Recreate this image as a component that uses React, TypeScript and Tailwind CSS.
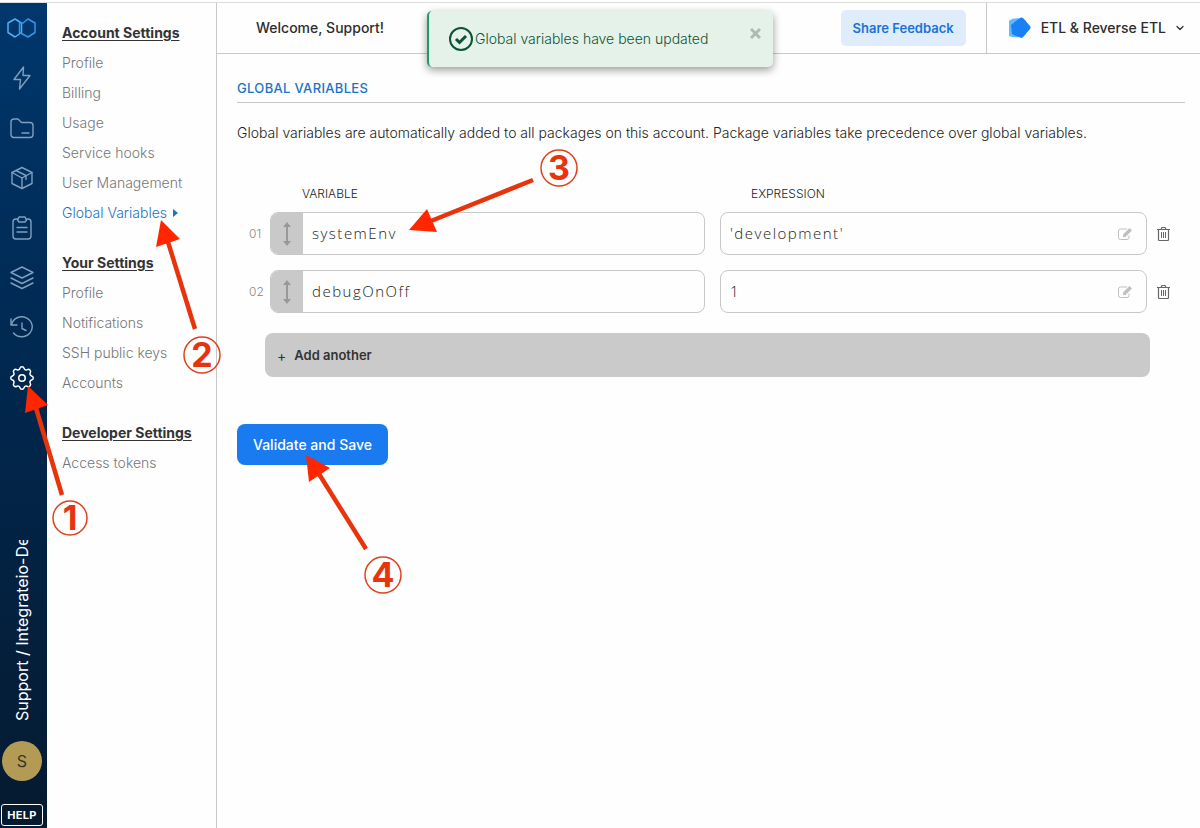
import React, { useState } from 'react';
import clsx from 'clsx';
import { ChevronDown } from 'lucide-react';

interface Variable {
  name: string;
  expression: string;
}

interface Callout {
  label: string;
  center: [number, number];
  tail: [number, number];
  neck: [number, number];
  head: string;
}

const NAV_SECTIONS = [
  {
    title: 'Account Settings',
    items: ['Profile', 'Billing', 'Usage', 'Service hooks', 'User Management', 'Global Variables'],
  },
  { title: 'Your Settings', items: ['Profile', 'Notifications', 'SSH public keys', 'Accounts'] },
  { title: 'Developer Settings', items: ['Access tokens'] },
];

const RAIL_ICONS = [
  { name: 'Connections', paths: ['M13.5 1 4 13.5h6.5L9.5 23 20 9.5h-7z'] },
  {
    name: 'Files',
    paths: ['M1 18.500V6a3 3 0 0 1 3-3h4l3.500 3.500H20a3 3 0 0 1 3 3v9a3 3 0 0 1-3 3H4a3 3 0 0 1-3-3z', 'M12 17h7'],
  },
  { name: 'Packages', paths: ['M12 1.500 22 6.500v11l-10 5-10-5v-11z', 'M2 6.500l10 5.500 10-5.500', 'M12 12v10.500', 'M6 4.500l10 5v4'] },
  {
    name: 'Jobs',
    paths: ['M8 3H6a3 3 0 0 0-3 3v14a3 3 0 0 0 3 3h12a3 3 0 0 0 3-3V6a3 3 0 0 0-3-3h-2', 'M9 1h6l1.500 3-1.500 2H9L7.500 4z', 'M7 11.500h10', 'M7 16h10'],
  },
  { name: 'Layers', paths: ['M12 1 23 6.500 12 12 1 6.500z', 'M1 12l11 5.500L23 12', 'M1 17l11 5.500L23 17'] },
  { name: 'History', paths: ['M1 3v6h6', 'M1.500 8.500A10.500 10 0 1 1 3.500 17', 'M12 7v5.500l4 2'] },
];

const GEAR_PATH =
  'M10.325 4.317c.426-1.756 2.924-1.756 3.35 0a1.724 1.724 0 002.573 1.066c1.543-.94 3.31.826 2.37 2.37a1.724 1.724 0 001.065 2.572c1.756.426 1.756 2.924 0 3.35a1.724 1.724 0 00-1.066 2.573c.94 1.543-.826 3.31-2.37 2.37a1.724 1.724 0 00-2.572 1.065c-.426 1.756-2.924 1.756-3.35 0a1.724 1.724 0 00-2.573-1.066c-1.543.94-3.31-.826-2.37-2.37a1.724 1.724 0 00-1.065-2.572c-1.756-.426-1.756-2.924 0-3.35a1.724 1.724 0 001.066-2.573c-.94-1.543.826-3.31 2.37-2.37.996.608 2.296.07 2.572-1.065z';

const CALLOUTS: Callout[] = [
  { label: '1', center: [70, 518], tail: [62, 495], neck: [36, 408], head: '28,386 25,413 48,405' },
  { label: '2', center: [202, 355], tail: [195, 329], neck: [168, 242], head: '161,220 156,247 180,239' },
  { label: '3', center: [559, 168], tail: [533, 180], neck: [431, 221], head: '409,230 427,209 437,232' },
  { label: '4', center: [383, 575], tail: [366, 549], neck: [319, 474], head: '306,455 309,482 330,468' },
];

function IconRail() {
  return (
    <aside className="flex w-[47px] shrink-0 flex-col bg-linear-to-b from-[#00376d] via-[#01264c] to-[#051a30]">
      <nav className="flex flex-col text-[#7f9fbd]">
        <a href="#home" aria-label="Home" className="flex h-[50px] items-center pl-[7px]">
          <svg width="29" height="20" viewBox="0 0 29 20" fill="none" strokeWidth="1.5" strokeLinejoin="round">
            <path d="M8 1l6.500 4v9.500L8 19l-7-4.500V5z" stroke="#4ab2f5" />
            <path d="M21 1l7 4v9.500L21 19l-8.500-4.500V5h3.500z" stroke="#3097ea" />
          </svg>
        </a>
        {RAIL_ICONS.map(({ name, paths }) => (
          <a key={name} href="#rail" aria-label={name} className="flex h-[50px] items-center pl-[10px]">
            <svg
              width="24"
              height="24"
              viewBox="0 0 24 24"
              fill="none"
              stroke="currentColor"
              strokeWidth="1.4"
              strokeLinejoin="round"
              strokeLinecap="round"
            >
              {paths.map((d) => (
                <path key={d} d={d} />
              ))}
            </svg>
          </a>
        ))}
        <a href="#settings" aria-label="Settings" className="flex h-[50px] items-center pl-[7px] text-white">
          <svg width="30" height="30" viewBox="0 0 24 24" fill="none" stroke="currentColor" strokeWidth="1.2">
            <path d={GEAR_PATH} />
            <circle cx="12" cy="12" r="2.600" />
          </svg>
        </a>
      </nav>

      <div className="mt-auto flex flex-col items-center pr-[3px] pb-0.5">
        <span className="h-[181px] rotate-180 overflow-hidden text-base leading-6 whitespace-nowrap text-white [writing-mode:vertical-rl]">
          Support / Integrateio-De
        </span>
        <span className="mt-5 flex size-10 items-center justify-center rounded-full bg-[#b39b55] text-base text-[#3b3524]">
          S
        </span>
        <button
          type="button"
          className="mt-[23px] h-[22px] w-[42px] rounded-[3px] border border-white text-[11px] font-bold tracking-wide text-white"
        >
          HELP
        </button>
      </div>
    </aside>
  );
}

function SettingsNav() {
  return (
    <nav className="flex w-[170px] shrink-0 flex-col gap-5 border-r border-[#c8c8c8] py-[15px] pl-[15px] text-sm whitespace-nowrap">
      {NAV_SECTIONS.map(({ title, items }) => (
        <section key={title}>
          <h2 className="leading-[30px] font-bold text-[#333] underline underline-offset-2">{title}</h2>
          <ul>
            {items.map((item) => {
              const active = item === 'Global Variables';
              return (
                <li key={item} className="h-[30px] leading-[30px]">
                  <a
                    href="#settings"
                    className={clsx('inline-flex items-center gap-1.5', active ? 'text-[#1a73c5]' : 'font-light text-[#777]')}
                  >
                    <span className="font-light">{item}</span>
                    {active && (
                      <svg width="5" height="8" viewBox="0 0 5 8" fill="currentColor">
                        <path d="M0 0l5 4-5 4z" />
                      </svg>
                    )}
                  </a>
                </li>
              );
            })}
          </ul>
        </section>
      ))}
    </nav>
  );
}

function Header() {
  return (
    <header className="flex h-[51px] items-stretch justify-between border-b border-[#c8c8c8] text-sm font-medium text-[#2d2d2d]">
      <p className="flex items-center pl-[39px]">Welcome, Support!</p>
      <div className="flex items-center">
        <button type="button" className="h-9 rounded-[5px] bg-[#dfecfc] px-3 text-[13px] font-semibold text-[#1a73d8]">
          Share Feedback
        </button>
        <button type="button" className="ml-5 flex h-full items-center border-l border-[#c8c8c8] pr-[14px] pl-5">
          <svg width="24" height="22" viewBox="0 0 24 22">
            <path d="M2 4c4-4 14-3 17 0v13c-2 4-13 4-17 2z" fill="#5dbcfb" />
            <path d="M4 8l9-7c1-.8 2-.8 3 0l7 8c.8 1 .8 2 0 3l-7 8c-1 1-2 1-3 .500L5 17z" fill="#1a80f5" />
          </svg>
          <span className="ml-2.5">ETL &amp; Reverse ETL</span>
          <ChevronDown className="ml-2 size-3" strokeWidth={2.5} />
        </button>
      </div>
    </header>
  );
}

function Toast({ onClose }: { onClose: () => void }) {
  return (
    <div
      role="status"
      className="absolute top-[11px] left-1/2 flex h-14 w-[346px] -translate-x-1/2 items-center rounded-[5px] border-l-2 border-[#1a9c69] bg-[#e4f2ea] pl-5 text-sm text-[#0f5237] shadow-[0_3px_8px_rgba(0,0,0,0.4)]"
    >
      <svg width="24" height="24" viewBox="0 0 24 24" fill="none" stroke="#0b5238">
        <circle cx="12" cy="12" r="11" strokeWidth="2" />
        <path d="M7 12l3.500 3.500L17 9" strokeWidth="3" />
      </svg>
      <span className="ml-0.5 font-light">Global variables have been updated</span>
      <button type="button" aria-label="Close" onClick={onClose} className="mr-3 mb-3 ml-auto text-[#aebbb4]">
        <svg width="11" height="11" viewBox="0 0 11 11" fill="none" stroke="currentColor" strokeWidth="3">
          <path d="M1 1l9 9M10 1l-9 9" />
        </svg>
      </button>
    </div>
  );
}

function VariableRow({
  index,
  variable,
  onChange,
  onRemove,
}: {
  index: number;
  variable: Variable;
  onChange: (patch: Partial<Variable>) => void;
  onRemove: () => void;
}) {
  const inputClass =
    "w-full min-w-0 flex-1 bg-transparent px-[9px] font-['Open_Sans',sans-serif] text-[15px] font-light tracking-widest text-[#222] outline-none";

  return (
    <div className="flex items-center">
      <span className="w-[21px] shrink-0 text-xs font-light text-[#888]">{String(index + 1).padStart(2, '0')}</span>
      <div className="flex h-[43px] flex-[435] basis-0 overflow-hidden rounded-lg border border-[#c8c8c8]">
        <button type="button" aria-label="Reorder" className="flex w-8 shrink-0 items-center justify-center bg-[#c9c9c9] text-[#999]">
          <svg width="8" height="24" viewBox="0 0 8 24" fill="currentColor">
            <path d="M4 0l4 5H5v14h3l-4 5-4-5h3V5H0z" />
          </svg>
        </button>
        <input
          aria-label={`Variable ${index + 1}`}
          className={inputClass}
          value={variable.name}
          onChange={(e) => onChange({ name: e.target.value })}
        />
      </div>
      <div className="ml-[15px] flex h-[43px] flex-[427] basis-0 items-center rounded-lg border border-[#c8c8c8]">
        <input
          aria-label={`Expression ${index + 1}`}
          className={inputClass}
          value={variable.expression}
          onChange={(e) => onChange({ expression: e.target.value })}
        />
        <button type="button" aria-label="Edit expression" className="mr-[14px] text-[#c0c0c0]">
          <svg width="14" height="12" viewBox="0 0 14 12">
            <path
              d="M9 1H2.500Q.5 1 .5 3v6.500q0 2 2 2H9q2 0 2-2V7.500"
              fill="none"
              stroke="currentColor"
            />
            <path d="M11.500 0L14 2.500 7.500 9H5V6.500z" fill="currentColor" />
          </svg>
        </button>
      </div>
      <button type="button" aria-label="Delete variable" onClick={onRemove} className="ml-2.5 shrink-0 text-[#666]">
        <svg width="13" height="14" viewBox="0 0 13 14" fill="none" stroke="currentColor">
          <path d="M0 2.500h13M4 2.500l1-2h3l1 2M1.500 3v9.500q0 1 1 1h8q1 0 1-1V3" strokeWidth="1.200" />
          <path d="M4.500 5v6M6.500 5v6M8.500 5v6" />
        </svg>
      </button>
    </div>
  );
}

// Numbered arrows that walk through the steps, drawn over the page
function Callouts() {
  return (
    <svg className="pointer-events-none absolute top-0 left-0" width="600" height="620" viewBox="0 0 600 620">
      {CALLOUTS.map(({ label, center, tail, neck, head }) => (
        <g key={label}>
          <line x1={tail[0]} y1={tail[1]} x2={neck[0]} y2={neck[1]} stroke="#e8340c" strokeWidth="4.500" />
          <polygon points={head} fill="#ff2600" />
          <circle cx={center[0]} cy={center[1]} r={label === '1' ? 17 : 18} fill="none" stroke="#e0401c" strokeWidth="1.500" />
          <text
            x={center[0]}
            y={center[1] + 12}
            textAnchor="middle"
            fill="#e8340c"
            className="font-['Inter',sans-serif] text-[34px] font-bold"
          >
            {label}
          </text>
        </g>
      ))}
    </svg>
  );
}

export default function App() {
  const [showToast, setShowToast] = useState(true);
  const [variables, setVariables] = useState<Variable[]>([
    { name: 'systemEnv', expression: "'development'" },
    { name: 'debugOnOff', expression: '1' },
  ]);

  const updateVariable = (index: number, patch: Partial<Variable>) => {
    setVariables((prev) => prev.map((v, i) => (i === index ? { ...v, ...patch } : v)));
  };

  return (
    <div className="relative flex min-h-screen flex-col overflow-hidden bg-[#fefefe] pt-0.5 font-['Inter',sans-serif] text-[#333]">
      <div className="flex flex-1 border-t border-[#dcdcdc]">
        <IconRail />
        <SettingsNav />
        <div className="min-w-0 flex-1">
          <Header />
          <main className="pt-[25px] pr-[15px] pl-5">
            <h1 className="border-b border-[#c8c8c8] pb-[5px] text-[13px] leading-[18px] font-medium tracking-wide text-[#1a73c5]">
              GLOBAL VARIABLES
            </h1>
            <p className="mt-5 text-sm leading-5 font-light text-[#222]">
              Global variables are automatically added to all packages on this account. Package variables take precedence over
              global variables.
            </p>

            <div className="mt-10 pr-[15px] pl-3">
              <div className="flex pr-[23px] pl-[53px] text-xs leading-[22px] font-light text-[#222]">
                <span className="flex-[449] basis-0">VARIABLE</span>
                <span className="flex-[396] basis-0">EXPRESSION</span>
              </div>
              <div className="mt-[7px] flex flex-col gap-[15px]">
                {variables.map((variable, i) => (
                  <VariableRow
                    key={i}
                    index={i}
                    variable={variable}
                    onChange={(patch) => updateVariable(i, patch)}
                    onRemove={() => setVariables((prev) => prev.filter((_, idx) => idx !== i))}
                  />
                ))}
              </div>
              <div className="mt-5 pr-5 pl-4">
                <button
                  type="button"
                  onClick={() => setVariables((prev) => [...prev, { name: '', expression: '' }])}
                  className="flex h-11 w-full items-center gap-2 rounded-lg bg-[#cacaca] px-3 pt-0.5 text-[13px] font-semibold"
                >
                  <span className="text-sm font-normal">+</span>
                  Add another
                </button>
              </div>
            </div>

            <button type="button" className="mt-[47px] h-[41px] rounded-lg bg-[#1a7af0] px-4 text-sm font-medium text-white">
              Validate and Save
            </button>
          </main>
        </div>
      </div>

      {showToast && <Toast onClose={() => setShowToast(false)} />}
      <Callouts />
    </div>
  );
}
